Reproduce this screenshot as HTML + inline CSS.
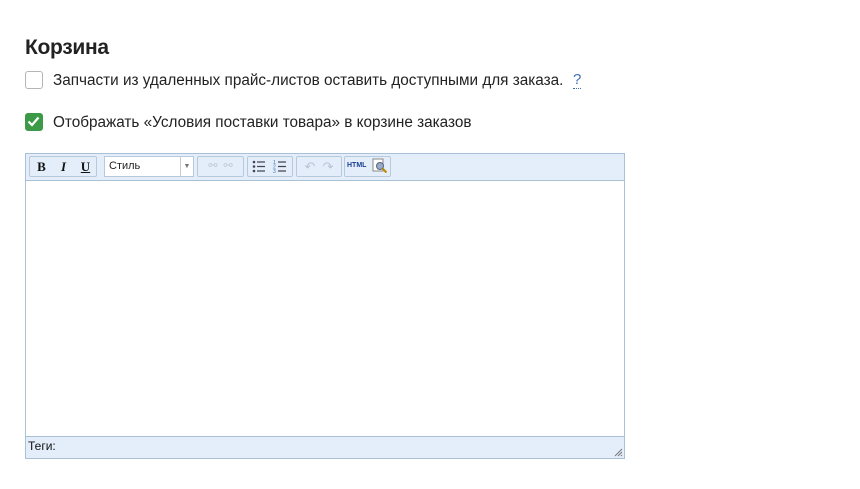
<!DOCTYPE html>
<html><head><meta charset="utf-8"><style>
*{box-sizing:border-box;margin:0;padding:0}
body{width:860px;height:489px;background:#fff;font-family:"Liberation Sans","DejaVu Sans",sans-serif;color:#222;position:relative;overflow:hidden}
h1{position:absolute;left:25px;top:36px;font-size:21px;font-weight:bold;color:#222;letter-spacing:-0.3px}
.cb{position:absolute;width:18px;height:18px;border:1.5px solid #b5b5b5;border-radius:3px;background:#fff}
.cb.on{background:#3c9a46;border-color:#3c9a46}
.lbl{position:absolute;font-size:15.3px;color:#222;white-space:nowrap}
.q{position:absolute;left:573px;top:72px;font-size:15px;color:#3d6fb3;border-bottom:1px dotted #3d6fb3;line-height:16px}
.ed{position:absolute;left:25px;top:153px;width:600px;height:306px;border:1px solid #a9c1d7;background:#fff}
.tb{position:absolute;left:0;top:0;width:598px;height:27px;background:#e4eefb;border-bottom:1px solid #a9c1d7}
.grp{position:absolute;top:2px;height:21px;border:1px solid #b8c9dc;background:#e4eefb;border-radius:2px}
.btn{position:absolute;top:0;width:21px;height:19px;font-family:"Liberation Serif",serif;font-size:13px;font-weight:bold;text-align:center;line-height:19px;color:#111}
.sel{position:absolute;left:78px;top:2px;width:90px;height:21px;background:#fff;border:1px solid #b8c9dc;font-size:11px;line-height:19px;padding-left:4px;color:#222}
.ft{position:absolute;left:0;bottom:0;width:598px;height:22px;background:#e4eefb;border-top:1px solid #a9c1d7;font-size:12px;line-height:18px;padding-left:2px;color:#111}
</style></head><body>
<h1>Корзина</h1>
<div class="cb" style="left:25px;top:71px"></div>
<div class="lbl" style="left:53px;top:72px">Запчасти из удаленных прайс-листов оставить доступными для заказа.</div>
<div class="q">?</div>
<div class="cb on" style="left:25px;top:113px"><svg width="15" height="15" viewBox="0 0 15 15" style="position:absolute;left:0;top:0"><path d="M2.5 7.5 L6 11 L12.5 3.5" fill="none" stroke="#fff" stroke-width="2.2"/></svg></div>
<div class="lbl" style="left:53px;top:114px">Отображать «Условия поставки товара» в корзине заказов</div>
<div class="ed">
 <div class="tb">
  <div class="grp" style="left:3px;width:68px">
   <div class="btn" style="left:1px">B</div>
   <div class="btn" style="left:23px;font-style:italic">I</div>
   <div class="btn" style="left:45px;text-decoration:underline">U</div>
  </div>
  <div class="sel">Стиль<span style="position:absolute;right:0;top:0;width:13px;height:19px;border-left:1px solid #ccc;font-size:7px;text-align:center;color:#777">▼</span></div>
  <div class="grp" style="left:171px;width:47px;color:#bcc8d4;font-size:11px;line-height:19px;text-align:center">⚯ &nbsp;⚯</div>
  <div class="grp" style="left:221px;width:46px">
   <svg width="44" height="19" viewBox="0 0 44 19"><g fill="#445"><circle cx="6" cy="5" r="1.3"/><circle cx="6" cy="9.5" r="1.3"/><circle cx="6" cy="14" r="1.3"/></g><g stroke="#445" stroke-width="1.3"><path d="M9 5h8M9 9.5h8M9 14h8M30 5h8M30 9.5h8M30 14h8"/></g><g fill="#47a" font-size="5" font-family="Liberation Sans"><text x="25" y="7">1</text><text x="25" y="11.5">2</text><text x="25" y="16">3</text></g></svg>
  </div>
  <div class="grp" style="left:270px;width:46px;color:#b4c4d6;font-size:13px;line-height:19px;text-align:center">↶ &nbsp;↷</div>
  <div class="grp" style="left:318px;width:47px">
   <span style="position:absolute;left:2px;top:5px;font-size:7px;font-weight:bold;color:#1a3f8f;font-family:'Liberation Sans'">HTML</span>
   <svg width="18" height="18" viewBox="0 0 18 18" style="position:absolute;left:26px;top:0"><rect x="2" y="2" width="10" height="12" fill="#fff" stroke="#888"/><circle cx="9" cy="9" r="3.5" fill="#9ac" stroke="#567"/><path d="M11.5 11.5l4 4" stroke="#b80" stroke-width="2"/></svg>
  </div>
 </div>
 <div class="ft">Теги:<svg width="10" height="10" style="position:absolute;right:1px;bottom:1px"><path d="M9 2L2 9M9 5L5 9M9 8L8 9" stroke="#777"/></svg></div>
</div>
</body></html>
